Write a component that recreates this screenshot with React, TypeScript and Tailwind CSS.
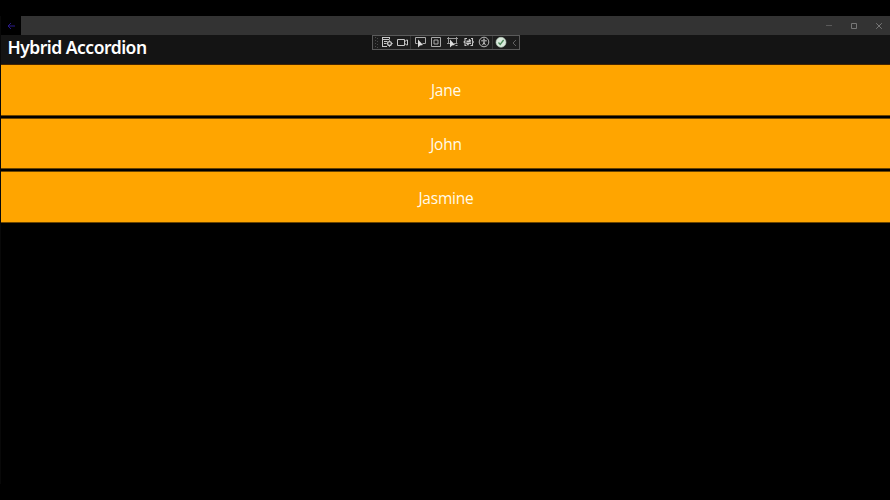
import React from "react";

const rows = [
  { name: "Jane", edge: "h-[51px] border-b" },
  { name: "John", edge: "mt-[2px] h-[51px] border-y" },
  { name: "Jasmine", edge: "mt-[2px] h-[52px] border-y pt-px" },
];

function Icon({ children, className = "" }: { children: React.ReactNode; className?: string }) {
  return (
    <svg viewBox="0 0 12 12" fill="none" stroke="#c8c8c8" strokeWidth="1" className={`h-3 w-3 shrink-0 ${className}`}>
      {children}
    </svg>
  );
}

function DebugToolbar() {
  return (
    <div className="absolute left-[372px] top-[35px] flex h-[15px] w-[148px] items-start border border-[#5a5a5a] bg-[#1d1d1d]">
      <svg viewBox="0 0 5 12" className="ml-px h-3 w-[5px] shrink-0" fill="#4a4a4a">
        {[1, 4, 7, 10].map((y) => (
          <g key={y}>
            <rect x="1" y={y} width="1" height="1" />
            <rect x="3" y={y + 1} width="1" height="1" />
          </g>
        ))}
      </svg>
      <Icon className="ml-[2px]">
        <path d="M1 1.5h8M1.5 1v10M8.5 1v2.5M2 3.5h6M3 5.5h3.5M3 7.5h2M1 10.5h5" />
        <circle cx="8.5" cy="7.5" r="1.9" strokeWidth="1.3" />
        <path d="M8.5 4.3v1.5M8.5 9.5v1.3M5.4 7.5h1.2M10.5 7.5h1.2" />
      </Icon>
      <Icon className="ml-[3px]">
        <path d="M1.5 3.5h7v6h-7zM8.8 5.5l2-1.5h.7v5h-.7l-2-1.5" />
      </Icon>
      <div className="ml-[2px] h-[13px] w-px bg-[#363636]" />
      <Icon className="ml-[3px]">
        <path d="M3.5 7.5H1.5v-6h10v6H8.5" stroke="#aaa" />
        <path d="M4 3.5v8l2-2 3-.5z" fill="#e0e0e0" stroke="none" />
      </Icon>
      <Icon className="ml-[4px]">
        <path d="M1.5 1.5h9v9h-9zM4 4h4v4H4z" stroke="#aaa" />
      </Icon>
      <Icon className="ml-[4px]">
        <path d="M2.5 1v7M10.5 1v7M1 2.5h11M1 7.5h3M8 7.5h3.5" stroke="#999" />
        <path d="M4 3.5v8l2-2 3-.5z" fill="#ddd" stroke="none" />
        <path d="M9.5 9.5h2" stroke="#aaa" />
      </Icon>
      <Icon className="ml-[4px]">
        <path d="M5 2.5H3v2.7L2 6l1 .8v2.7h1.5M9 2.5h1.5v2.7l1 .8-1 .8v2.7H8.5" strokeWidth="1.1" />
        <path d="M4.5 5.2h4.2M7 3.2l1.7 2M9 7.2H4.8L6.5 9.2" strokeWidth="1.4" />
      </Icon>
      <Icon className="ml-[4px]">
        <circle cx="6" cy="6" r="4.8" stroke="#b8b8b8" />
        <circle cx="6" cy="3.2" r=".8" fill="#d0d0d0" stroke="none" />
        <path d="M3.2 4.8h5.6M6 4.8v2M6 6.4L4.5 9.2M6 6.4l1.5 2.8" />
      </Icon>
      <div className="ml-[2px] h-[13px] w-px bg-[#363636]" />
      <Icon className="ml-[2px]">
        <circle cx="6" cy="6.3" r="5" fill="#d9eadc" stroke="#b5c9b9" strokeWidth=".6" />
        <path d="M3.5 6.5l1.7 1.9 3.4-4.4" stroke="#4d8a5b" strokeWidth="1.3" />
      </Icon>
      <svg viewBox="0 0 5 8" className="ml-[5px] mt-[3px] h-2 w-[5px] shrink-0" fill="none" stroke="#606060">
        <path d="M4 1L1 4l3 3" />
      </svg>
    </div>
  );
}

export default function App() {
  return (
    <div className="relative flex h-[500px] w-[890px] flex-col overflow-hidden bg-black pt-4 font-['Open_Sans','Noto_Sans',sans-serif] text-white">
      <div className="h-[468px] border-l border-[#080808]">
        <div className="flex h-[19px] bg-[#333333]">
          <button className="flex w-[20px] items-center justify-center bg-black" aria-label="Back">
            <svg viewBox="0 0 8 8" className="h-2 w-2" fill="none" stroke="#2a1a8c">
              <path d="M8 4H1M4 1L1 4l3 3" />
            </svg>
          </button>
          <div className="ml-auto flex items-center gap-[17px] pr-[7px]">
            <svg viewBox="0 0 8 8" className="h-2 w-2" stroke="#5a5a5a">
              <path d="M1 3.5h6" />
            </svg>
            <svg viewBox="0 0 8 8" className="h-2 w-2" fill="none" stroke="#777777">
              <path d="M1.5 1.5h5v5h-5z" />
            </svg>
            <svg viewBox="0 0 8 8" className="h-2 w-2" stroke="#777777">
              <path d="M1.2 1.2l5.6 5.6M6.8 1.2L1.2 6.8" />
            </svg>
          </div>
        </div>
        <header className="flex h-[30px] items-start border-b border-[#472600] bg-[#141414] pl-[6.5px]">
          <h1 className="whitespace-nowrap font-['Noto_Sans','Open_Sans',sans-serif] text-[17.5px] font-semibold leading-[25px] tracking-[-0.5px]">
            Hybrid Accordion
          </h1>
        </header>
        <main className="flex flex-col">
          {rows.map(({ name, edge }) => (
            <button
              key={name}
              className={`flex items-center justify-center border-[#6b4500] bg-[#ffa500] pl-px text-[15.5px] leading-5 tracking-[-0.2px] text-[#fffbea] ${edge}`}
            >
              {name}
            </button>
          ))}
        </main>
      </div>
      <DebugToolbar />
    </div>
  );
}
